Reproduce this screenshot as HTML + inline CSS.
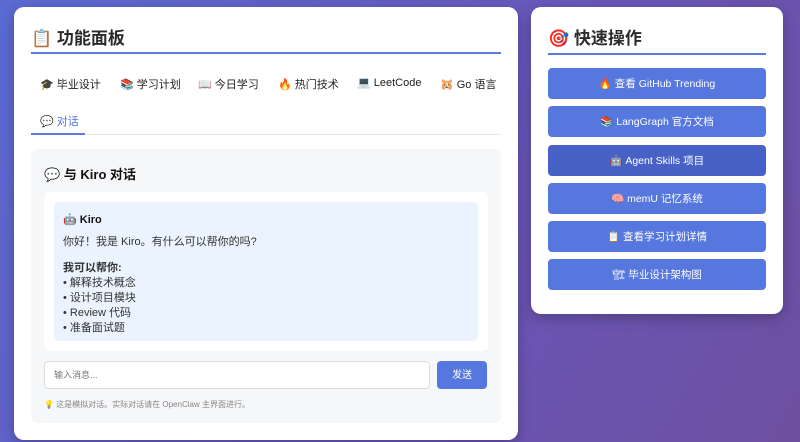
<!DOCTYPE html>
<html><head><meta charset="utf-8"><style>
*{box-sizing:border-box;margin:0;padding:0}
html{background:#6356b8;width:800px;height:442px;overflow:hidden}
body{width:800px;height:442px;overflow:hidden;background:linear-gradient(120deg,#5b6bd3 0%,#6a56b8 60%,#6d4f9f 100%);font-family:"Liberation Sans","Noto Sans CJK SC",sans-serif;color:#222;position:relative}
.card{position:absolute;background:#fff;border-radius:10px;box-shadow:0 4px 14px rgba(0,0,0,.25)}
#l{left:14px;top:7px;width:504px;height:433px}
#r{left:531px;top:7px;width:252px;height:307px}
h2{position:absolute;font-size:17px;font-weight:bold;color:#2b2b2b}
.line{position:absolute;height:2px;background:#5b7be0}
.tab{position:absolute;top:69px;font-size:11px;color:#222}
.sec{position:absolute;left:17px;top:142px;width:470px;height:274px;background:#f6f7f9;border-radius:7px}
.btn{position:absolute;left:17px;width:218px;height:31px;background:#5677dd;border-radius:4px;color:#fff;font-size:10.5px;text-align:center;line-height:33px}
</style></head><body>
<div class="card" id="l">
<h2 style="left:17px;top:17px">📋 功能面板</h2>
<div class="line" style="left:17px;top:45px;width:470px"></div>
<div class="tab" style="left:26px">🎓 毕业设计</div>
<div class="tab" style="left:106px">📚 学习计划</div>
<div class="tab" style="left:184px">📖 今日学习</div>
<div class="tab" style="left:264px">🔥 热门技术</div>
<div class="tab" style="left:343px">💻 LeetCode</div>
<div class="tab" style="left:426px">🐹 Go 语言</div>
<div class="tab" style="left:26px;top:106px;color:#4f72e0">💬 对话</div>
<div style="position:absolute;left:17px;top:127px;width:470px;height:1px;background:#e8e8e8"></div>
<div style="position:absolute;left:17px;top:126px;width:54px;height:2px;background:#5b7be0"></div>
<div class="sec">
<div style="position:absolute;left:13px;top:15px;font-size:13px;font-weight:bold;color:#111">💬 与 Kiro 对话</div>
<div style="position:absolute;left:13px;top:43px;width:444px;height:159px;background:#fff;border-radius:5px">
<div style="position:absolute;left:10px;top:10px;width:424px;height:139px;background:#ebf4fe;border-radius:5px;padding:11px 9px;font-size:11px;line-height:15px;color:#333">
<div style="font-weight:bold;color:#111;margin-bottom:7px">🤖 Kiro</div>
<div>你好！我是 Kiro。有什么可以帮你的吗?</div><div style="height:11px"></div>
<div style="font-weight:bold">我可以帮你:</div>
<div>• 解释技术概念</div><div>• 设计项目模块</div><div>• Review 代码</div><div>• 准备面试题</div>
</div></div>
<div style="position:absolute;left:13px;top:212px;width:386px;height:28px;background:#fff;border:1px solid #ddd;border-radius:4px;font-size:9px;color:#777;line-height:26px;padding-left:9px">输入消息...</div>
<div style="position:absolute;left:406px;top:212px;width:50px;height:28px;background:#5677dd;border-radius:4px;color:#fff;font-size:10px;text-align:center;line-height:30px">发送</div>
<div style="position:absolute;left:13px;top:250px;font-size:8px;color:#888">💡 这是模拟对话。实际对话请在 OpenClaw 主界面进行。</div>
</div>
</div>
<div class="card" id="r">
<h2 style="left:17px;top:17px">🎯 快速操作</h2>
<div class="line" style="left:17px;top:46px;width:218px"></div>
<div class="btn" style="top:61px">🔥 查看 GitHub Trending</div>
<div class="btn" style="top:99px">📚 LangGraph 官方文档</div>
<div class="btn" style="top:138px;background:#4761c7">🤖 Agent Skills 项目</div>
<div class="btn" style="top:176px">🧠 memU 记忆系统</div>
<div class="btn" style="top:214px">📋 查看学习计划详情</div>
<div class="btn" style="top:252px">🏗 毕业设计架构图</div>
</div>
</body></html>
